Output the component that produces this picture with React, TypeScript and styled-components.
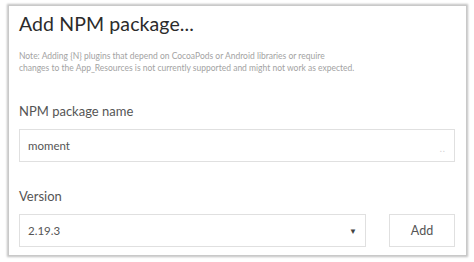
import React from "react";
import styled, { createGlobalStyle } from "styled-components";

const GlobalStyle = createGlobalStyle`
  html, body {
    margin: 0;
    padding: 0;
    background: #ffffff;
  }
  body {
    font-family: Lato, "Noto Sans", sans-serif;
    color: #333;
  }
`;

const Page = styled.div`
  width: 474px;
  height: 262px;
  padding: 5px 7px 6px 8px;
  box-sizing: border-box;
`;

const Panel = styled.section`
  height: 100%;
  box-sizing: border-box;
  background: #fff;
  border: 1px solid #c9c9c9;
  box-shadow: 0 0 2px 1px rgba(0, 0, 0, 0.25);
  padding: 6px 11px 0 10px;
  display: flex;
  flex-direction: column;
`;

const Title = styled.h1`
  margin: 0;
  font-size: 19.5px;
  font-weight: 400;
  line-height: 24px;
  color: #2b2b2b;
  letter-spacing: 0.1px;
`;

const Note = styled.p`
  margin: 14px 0 0;
  font-size: 8.5px;
  line-height: 12px;
  color: #a3a3a3;
`;

const Label = styled.label<{ $top: number }>`
  display: block;
  margin-top: ${(p) => p.$top}px;
  font-size: 13px;
  line-height: 16px;
  color: #555;
`;

const Field = styled.div`
  position: relative;
  margin-top: 10px;
  height: 33px;
  box-sizing: border-box;
  border: 1px solid #e0e0e0;
  display: flex;
  align-items: center;
  padding: 0 8px;
  font-size: 11.5px;
  color: #555;
`;

const Grip = styled.span`
  margin-left: auto;
  margin-top: 6px;
  font-size: 9px;
  letter-spacing: 1px;
  color: #d0d0d0;
`;

const Row = styled.div`
  display: flex;
  gap: 23px;
  margin-top: 10px;
`;

const Select = styled(Field)`
  margin-top: 0;
  flex: 1;
`;

const Arrow = styled.span`
  margin-left: auto;
  font-size: 8px;
  color: #444;
`;

const Button = styled.button`
  width: 66px;
  height: 33px;
  box-sizing: border-box;
  background: #fff;
  border: 1px solid #e0e0e0;
  font-family: inherit;
  font-size: 12.5px;
  color: #555;
  padding: 0;
`;

export default function App() {
  return (
    <>
      <GlobalStyle />
      <Page>
        <Panel>
          <Title>Add NPM package...</Title>
          <Note>
            Note: Adding {"{N}"} plugins that depend on CocoaPods or Android libraries or require
            <br />
            changes to the App_Resources is not currently supported and might not work as expected.
          </Note>
          <Label $top={29}>NPM package name</Label>
          <Field>
            moment
            <Grip>..</Grip>
          </Field>
          <Label $top={26}>Version</Label>
          <Row>
            <Select>
              2.19.3
              <Arrow>▼</Arrow>
            </Select>
            <Button>Add</Button>
          </Row>
        </Panel>
      </Page>
    </>
  );
}
